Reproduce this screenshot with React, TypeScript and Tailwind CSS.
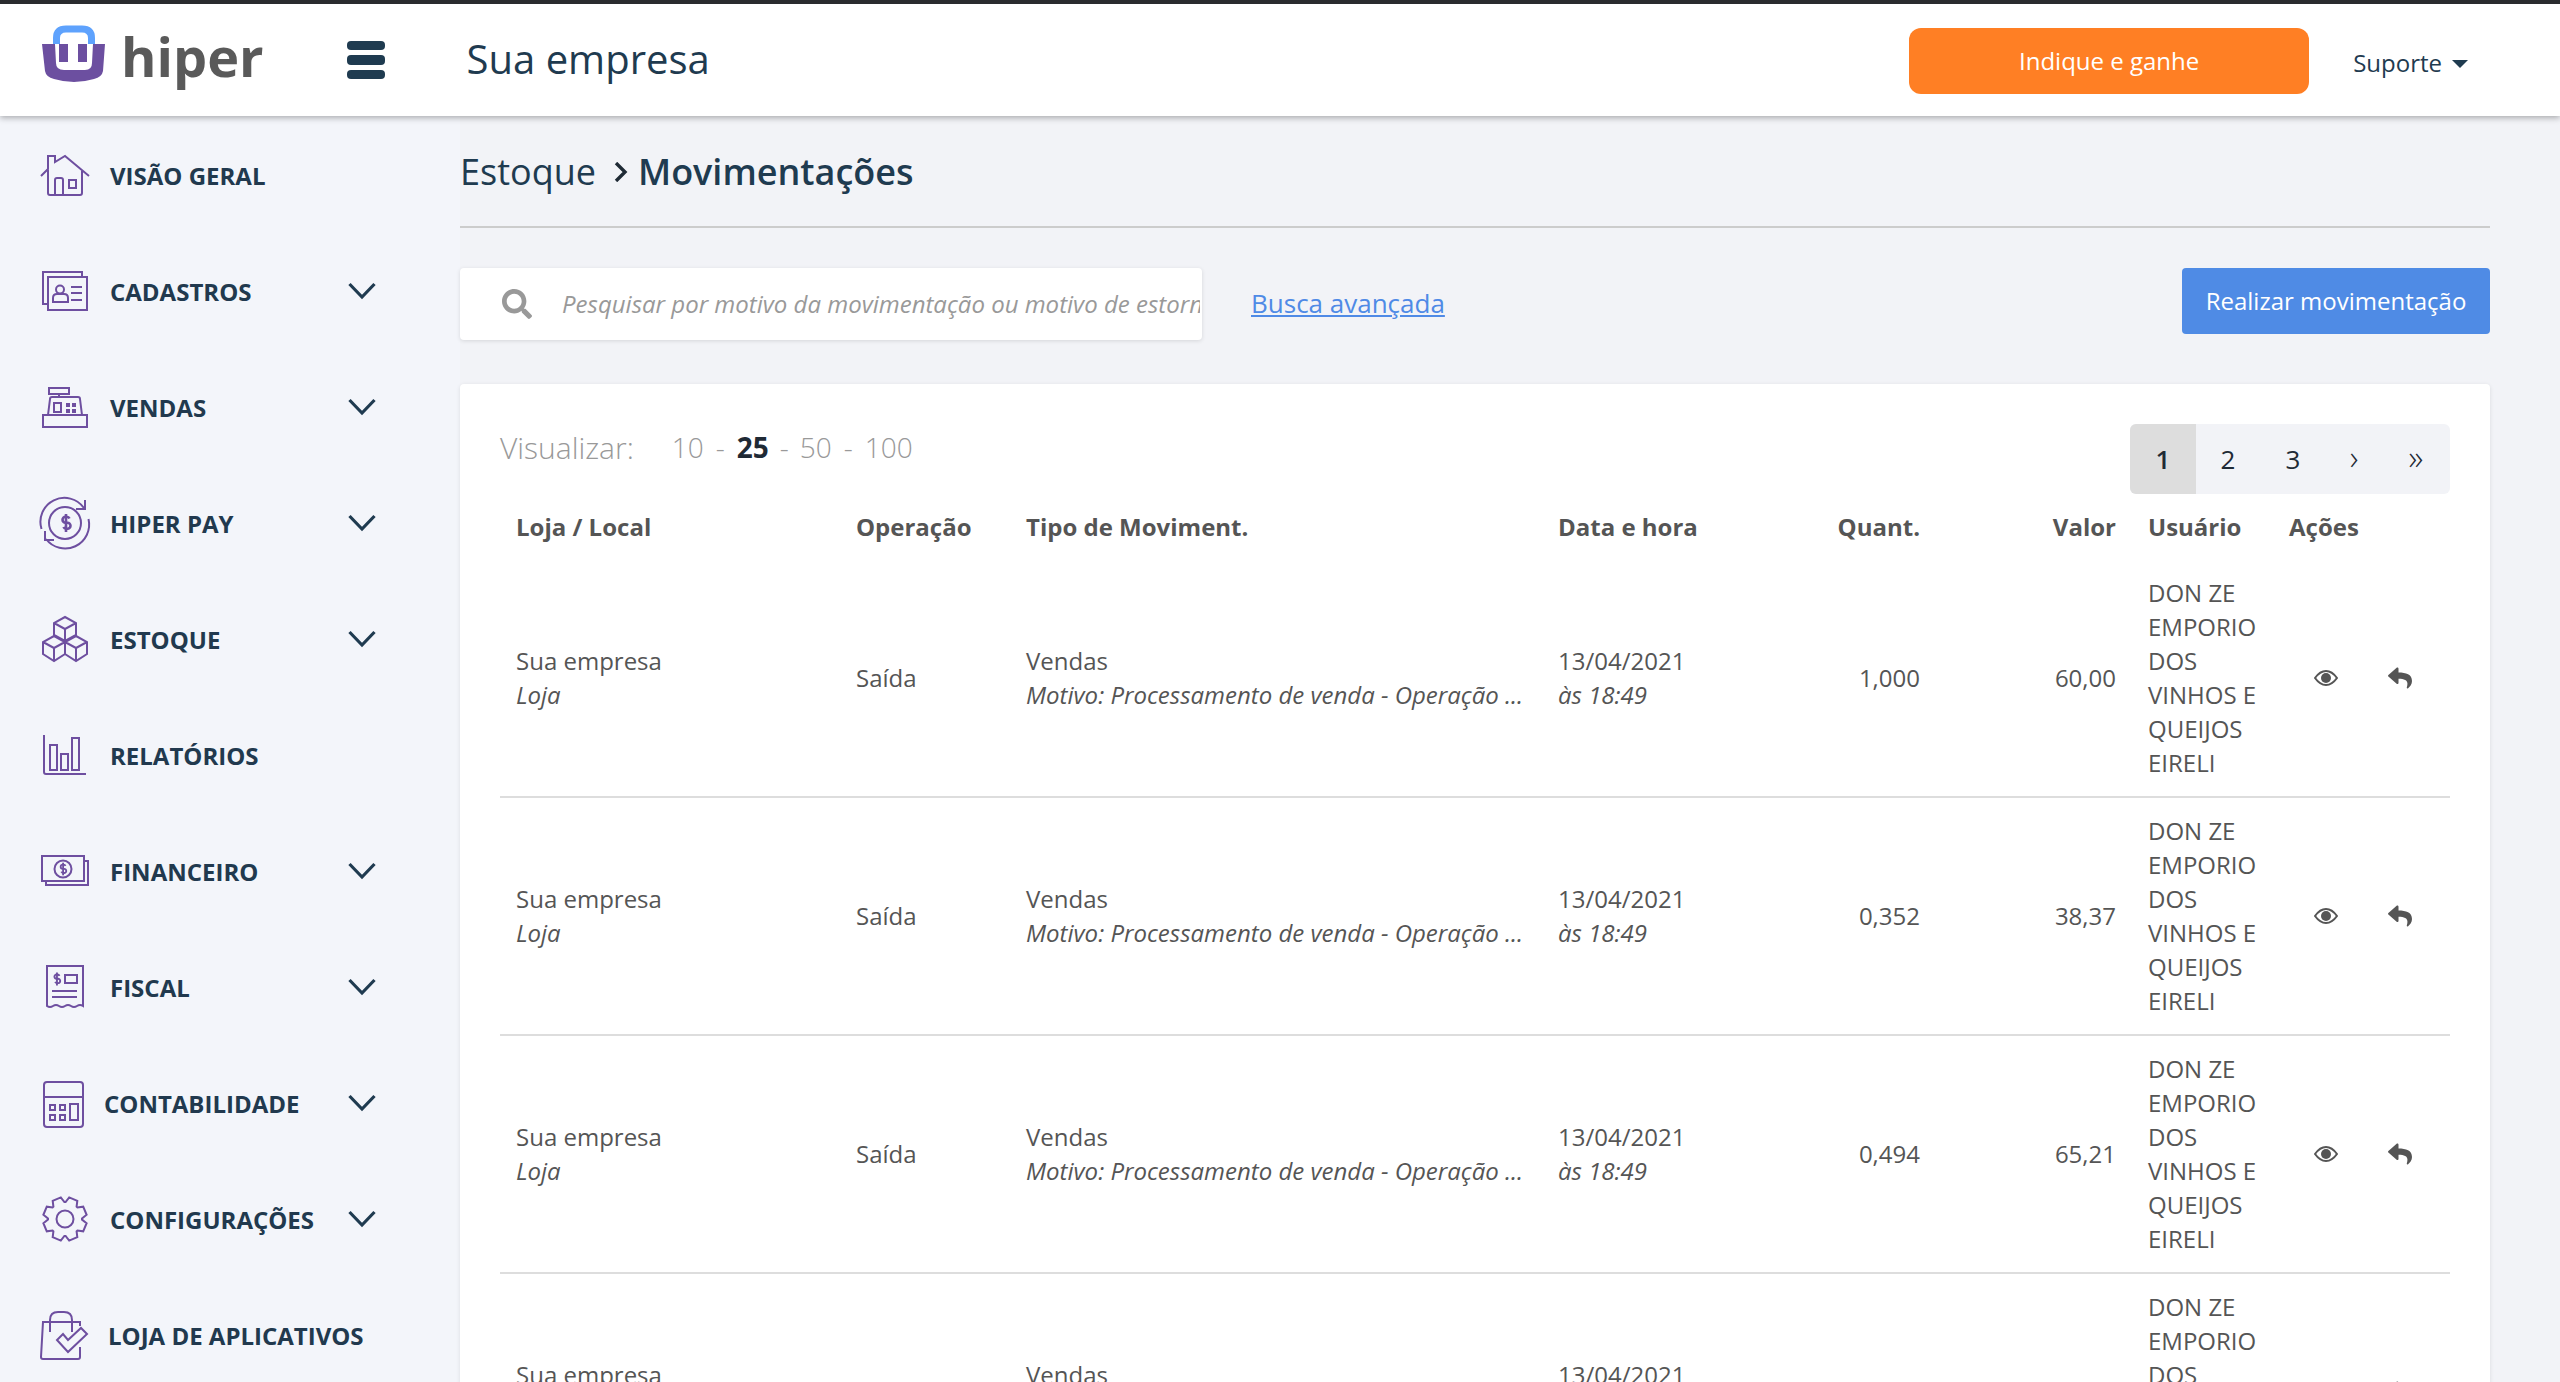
import { ReactNode } from "react";
import { FaReply, FaSearch } from "react-icons/fa";

const dollar = "M-3.5 -4.5a3.5 2.6 0 0 0 -3 -1.8h-1a3 3 0 0 0 0 6h2a3 3 0 0 1 0 6h-1a3.5 2.6 0 0 1 -3 -1.8";

function gearPath() {
  const points: string[] = [];
  for (let i = 0; i < 8; i++) {
    const a = (i * Math.PI) / 4 + Math.PI / 8;
    const at = (r: number, o: number) =>
      `${(25 + r * Math.cos(a + o)).toFixed(1)} ${(24 + r * Math.sin(a + o)).toFixed(1)}`;
    points.push(at(17, -0.36), at(22, -0.2), at(22, 0.2), at(17, 0.36));
  }
  return `M${points.join(" L")} Z`;
}

const icons: Record<string, ReactNode> = {
  home: (
    <>
      <path d="M1 25 L8 18 V5 H15 V11 L25 5 L49 25" />
      <path d="M8 19 V42 Q8 44 10 44 H40 Q42 44 42 42 V20" />
      <path d="M15 44 V29 Q15 27 17 27 H21 Q23 27 23 29 V44" />
      <rect x="29" y="29" width="7" height="8" />
    </>
  ),
  card: (
    <>
      <path d="M8 37 H3 V5 H42 V10" />
      <rect x="8" y="10" width="39" height="33" />
      <circle cx="20" cy="22.5" r="4" />
      <path d="M13 35 V31 Q13 27 17 27 H24 Q28 27 28 31 V35 Z" />
      <path d="M31 20 H42 M31 26 H42 M31 33 H42" />
    </>
  ),
  register: (
    <>
      <rect x="9" y="5" width="20" height="6" />
      <path d="M19 11 V14" />
      <path d="M8 32 L10 16 Q10 14 12 14 H38 Q40 14 40 16 L42 32" />
      <rect x="3" y="32" width="44" height="12" />
      <rect x="14" y="20" width="7" height="9" />
      <path d="M26 22 H30 M32 22 H36 M26 28 H30 M32 28 H36" strokeWidth="4" />
    </>
  ),
  pay: (
    <>
      <path d="M1.5 30 A24 24 0 0 1 44 9" />
      <path d="M48.5 20 A24 24 0 0 1 6 40" />
      <path d="M45 1 V10 H36 M5 32 V41 H14" />
      <circle cx="25" cy="24" r="16" />
      <g transform="translate(33 24)" strokeWidth="2.6">
        <path d={dollar} />
        <path d="M-7 -9 V9" />
      </g>
    </>
  ),
  boxes: (
    <>
      <path d="M25 2 L36 8 V20 L25 26 L14 20 V8 Z M14 8 L25 14 L36 8 M25 14 V26" />
      <path d="M14 21 L25 27 V39 L14 46 L3 39 V27 Z M3 27 L14 33 L25 27 M14 33 V46" />
      <path d="M36 21 L47 27 V39 L36 46 L25 39 V27 Z M25 27 L36 33 L47 27 M36 33 V46" />
    </>
  ),
  chart: (
    <>
      <path d="M4 4 V41 Q4 43 6 43 H46" />
      <rect x="10" y="14" width="7" height="25" />
      <rect x="21" y="23" width="7" height="16" />
      <rect x="32" y="7" width="7" height="32" />
    </>
  ),
  money: (
    <>
      <rect x="2" y="9" width="42" height="25" />
      <path d="M44 14 H48 V38 H6 V34" />
      <circle cx="23" cy="22" r="8.5" />
      <g transform="translate(28 22) scale(0.7)" strokeWidth="2.6">
        <path d={dollar} />
        <path d="M-7 -9 V9" />
      </g>
    </>
  ),
  receipt: (
    <>
      <path d="M7 3 H43 V43 Q40 41 37 43 T31 43 T25 43 T19 43 T13 43 T7 43 Z" />
      <rect x="25" y="12" width="12" height="8" />
      <g transform="translate(22 16) scale(0.72)" strokeWidth="2.6">
        <path d={dollar} />
        <path d="M-7 -9 V9" />
      </g>
      <path d="M12 28 H37 M12 34 H37" />
    </>
  ),
  calc: (
    <>
      <rect x="4" y="3" width="39" height="45" rx="3" />
      <path d="M4 18 H43" />
      <rect x="10" y="26" width="5" height="5" />
      <rect x="20" y="26" width="5" height="5" />
      <rect x="10" y="36" width="5" height="5" />
      <rect x="20" y="36" width="5" height="5" />
      <rect x="30" y="25" width="8" height="16" />
    </>
  ),
  gear: (
    <>
      <path d={gearPath()} />
      <circle cx="25" cy="24" r="8.5" />
    </>
  ),
  bag: (
    <>
      <path d="M40 15 V11 H3 L1 46 Q1 48 3 48 H38 Q40 48 40 46 V36" />
      <path d="M10 21 V9 Q10 1 18 1 H24 Q32 1 32 9 V21" />
      <path d="M17 29 L28 41 L47 23 L41 17 L28 29 L23 23 Z" />
    </>
  ),
};

const navItems = [
  { label: "VISÃO GERAL", icon: "home", labelClass: "ml-5", arrow: false },
  { label: "CADASTROS", icon: "card", labelClass: "ml-5", arrow: true },
  { label: "VENDAS", icon: "register", labelClass: "ml-5", arrow: true },
  { label: "HIPER PAY", icon: "pay", labelClass: "ml-5", arrow: true },
  { label: "ESTOQUE", icon: "boxes", labelClass: "ml-5", arrow: true },
  { label: "RELATÓRIOS", icon: "chart", labelClass: "ml-5", arrow: false },
  { label: "FINANCEIRO", icon: "money", labelClass: "ml-5", arrow: true },
  { label: "FISCAL", icon: "receipt", labelClass: "ml-5", arrow: true },
  { label: "CONTABILIDADE", icon: "calc", labelClass: "ml-[14px]", arrow: true },
  { label: "CONFIGURAÇÕES", icon: "gear", labelClass: "ml-5", arrow: true },
  { label: "LOJA DE APLICATIVOS", icon: "bag", labelClass: "ml-[18px]", arrow: false },
];

const rows = [
  { quant: "1,000", valor: "60,00" },
  { quant: "0,352", valor: "38,37" },
  { quant: "0,494", valor: "65,21" },
  { quant: "0,210", valor: "27,90" },
];

function Logo() {
  return (
    <svg width="64" height="58" viewBox="0 0 64 58" className="mb-[12px] shrink-0">
      <path d="M14.5 19 V13 Q14.5 4 24 4 H40 Q49.5 4 49.5 13 V19" fill="none" stroke="#5ea2fd" strokeWidth="7" />
      <path
        d="M0 19 H13 L14 38 Q14 45 22 45 H43 Q50 45 50 38 L51 19 H63 L61 46 Q60 52 52 54 Q32 60 12 54 Q4 52 3 46 Z"
        fill="#6c4fa0"
      />
      <rect x="17" y="19" width="9" height="18" fill="#6c4fa0" />
      <rect x="36" y="19" width="9" height="18" fill="#6c4fa0" />
    </svg>
  );
}

function NavIcon({ name }: { name: string }) {
  return (
    <svg width="50" height="50" viewBox="0 0 50 50" fill="none" stroke="#6e4fa0" strokeWidth="2" className="shrink-0 overflow-visible">
      {icons[name]}
    </svg>
  );
}

function Chevron() {
  return (
    <svg width="28" height="18" viewBox="0 0 28 18" fill="none" stroke="#1f3b50" strokeWidth="3.2" className="mb-[3px] ml-auto">
      <path d="M1.5 2 L14 15 L26.5 2" />
    </svg>
  );
}

function EyeIcon() {
  return (
    <svg width="24" height="16" viewBox="0 0 24 16" fill="#555">
      <path d="M1 8 Q6 1 12 1 Q18 1 23 8 Q18 15 12 15 Q6 15 1 8 Z" fill="none" stroke="#555" strokeWidth="2" />
      <circle cx="12" cy="8" r="5" />
    </svg>
  );
}

function Sidebar() {
  return (
    <aside className="w-[460px] shrink-0 bg-[#f3f5fa] pt-[2px]">
      {navItems.map((item) => (
        <div key={item.label} className="flex h-[116px] w-[376px] items-center pl-10">
          <NavIcon name={item.icon} />
          <span className={`${item.labelClass} text-2xl font-bold whitespace-nowrap text-[#21394e]`}>{item.label}</span>
          {item.arrow && <Chevron />}
        </div>
      ))}
    </aside>
  );
}

function Header() {
  return (
    <header className="relative z-10 flex h-[116px] shrink-0 items-center border-t-4 border-[#2a2b2e] bg-white pl-[42px] shadow-[0_2px_6px_rgba(0,0,0,0.3)]">
      <Logo />
      <span className="mb-[8px] ml-[15px] text-[54px] leading-none font-bold text-[#5a5a5a]">hiper</span>
      <div className="ml-[83px] flex w-[38px] flex-col gap-[5px]">
        <div className="h-[9px] rounded bg-[#1f3b50]" />
        <div className="h-[10px] rounded bg-[#1f3b50]" />
        <div className="h-[9px] rounded bg-[#1f3b50]" />
      </div>
      <span className="mb-[3px] ml-[82px] text-[40px] text-[#1f3b50]">Sua empresa</span>
      <button className="mt-[2px] ml-auto h-[66px] w-[400px] rounded-[12px] bg-[#ff7f24] text-2xl text-white">Indique e ganhe</button>
      <span className="mt-[6px] ml-[44px] text-2xl text-[#1f3b50]">Suporte</span>
      <div className="mt-[8px] mr-[92px] ml-[10px] h-0 w-0 border-x-[8px] border-t-[8px] border-x-transparent border-t-[#1f3b50]" />
    </header>
  );
}

function Toolbar() {
  return (
    <div className="mt-10 flex items-start">
      <div className="flex h-[72px] w-[742px] items-center rounded bg-white pr-[2px] pl-[42px] shadow-[0_1px_4px_rgba(0,0,0,0.12)]">
        <FaSearch className="shrink-0 text-[30px] text-[#999]" />
        <input
          readOnly
          placeholder="Pesquisar por motivo da movimentação ou motivo de estorno"
          className="ml-[30px] w-full min-w-0 bg-transparent text-2xl outline-none placeholder:text-[#999] placeholder:italic"
        />
      </div>
      <a className="mt-[16px] ml-[49px] text-[26px] text-[#4f8ae6] underline">Busca avançada</a>
      <button className="ml-auto h-[66px] w-[308px] rounded bg-[#4f8be5] text-2xl text-white">Realizar movimentação</button>
    </div>
  );
}

function Pagination() {
  return (
    <div className="ml-auto flex h-[70px] w-[320px] items-center overflow-hidden rounded-md bg-[#f2f3f7] text-[26px] text-[#1f2a35]">
      <div className="flex h-full w-[66px] items-center justify-center bg-[#dddddd] font-semibold">1</div>
      <div className="w-[64px] text-center">2</div>
      <div className="w-[66px] text-center">3</div>
      <div className="mb-1 w-[56px] text-center text-[34px] leading-none font-light">›</div>
      <div className="mb-1 w-[68px] text-center text-[34px] leading-none font-light">»</div>
    </div>
  );
}

function MovementsTable() {
  return (
    <table className="w-[1950px] table-fixed border-separate border-spacing-0 text-2xl leading-[34px] text-[#555]">
      <colgroup>
        <col className="w-[340px]" />
        <col className="w-[170px]" />
        <col className="w-[532px]" />
        <col className="w-[204px]" />
        <col className="w-[190px]" />
        <col className="w-[196px]" />
        <col className="w-[141px]" />
        <col className="w-[177px]" />
      </colgroup>
      <thead>
        <tr className="text-left font-bold">
          <th className="p-4">Loja / Local</th>
          <th className="p-4">Operação</th>
          <th className="p-4">Tipo de Moviment.</th>
          <th className="p-4">Data e hora</th>
          <th className="p-4 text-right">Quant.</th>
          <th className="p-4 text-right">Valor</th>
          <th className="p-4">Usuário</th>
          <th className="p-4">Ações</th>
        </tr>
      </thead>
      <tbody>
        {rows.map((row) => (
          <tr key={row.valor}>
            <td className="border-b-2 border-[#ddd] p-4">
              Sua empresa
              <br />
              <i>Loja</i>
            </td>
            <td className="border-b-2 border-[#ddd] p-4">Saída</td>
            <td className="border-b-2 border-[#ddd] p-4 whitespace-nowrap">
              Vendas
              <br />
              <i>Motivo: Processamento de venda - Operação ...</i>
            </td>
            <td className="border-b-2 border-[#ddd] p-4">
              13/04/2021
              <br />
              <i>às 18:49</i>
            </td>
            <td className="border-b-2 border-[#ddd] p-4 text-right">{row.quant}</td>
            <td className="border-b-2 border-[#ddd] p-4 text-right">{row.valor}</td>
            <td className="border-b-2 border-[#ddd] p-4">DON ZE EMPORIO DOS VINHOS E QUEIJOS EIRELI</td>
            <td className="border-b-2 border-[#ddd] p-4">
              <div className="flex items-center pl-[25px]">
                <EyeIcon />
                <FaReply className="ml-[50px] text-[24px] text-[#555]" />
              </div>
            </td>
          </tr>
        ))}
      </tbody>
    </table>
  );
}

export default function App() {
  return (
    <div className="flex h-screen flex-col overflow-hidden bg-[#f2f3f7] font-['Open_Sans',sans-serif]">
      <Header />
      <div className="flex min-h-0 flex-1">
        <Sidebar />
        <main className="min-w-0 flex-1 pt-8 pr-[70px]">
          <div className="flex h-12 items-center text-[36px] text-[#1f3b50]">
            Estoque
            <svg width="14" height="20" viewBox="0 0 14 20" fill="none" stroke="#1f2a35" strokeWidth="3.4" className="mr-[10px] ml-[18px]">
              <path d="M2 1 L11 10 L2 19" />
            </svg>
            <span className="font-semibold">Movimentações</span>
          </div>
          <div className="mt-[30px] h-[2px] bg-[#ccc]" />
          <Toolbar />
          <section className="mt-11 rounded bg-white px-10 pt-10 shadow-[0_1px_4px_rgba(0,0,0,0.1)]">
            <div className="flex h-[70px] items-start">
              <div className="flex h-[46px] items-center text-[28px] font-light text-[#999]">
                <span className="text-[30px]">Visualizar:</span>
                <span className="ml-[38px]">10</span>
                <span className="mx-[12px]">-</span>
                <b className="font-bold text-[#1f2a35]">25</b>
                <span className="mx-[11px]">-</span>
                <span>50</span>
                <span className="mx-[12px]">-</span>
                <span>100</span>
              </div>
              <Pagination />
            </div>
            <MovementsTable />
          </section>
        </main>
      </div>
    </div>
  );
}
